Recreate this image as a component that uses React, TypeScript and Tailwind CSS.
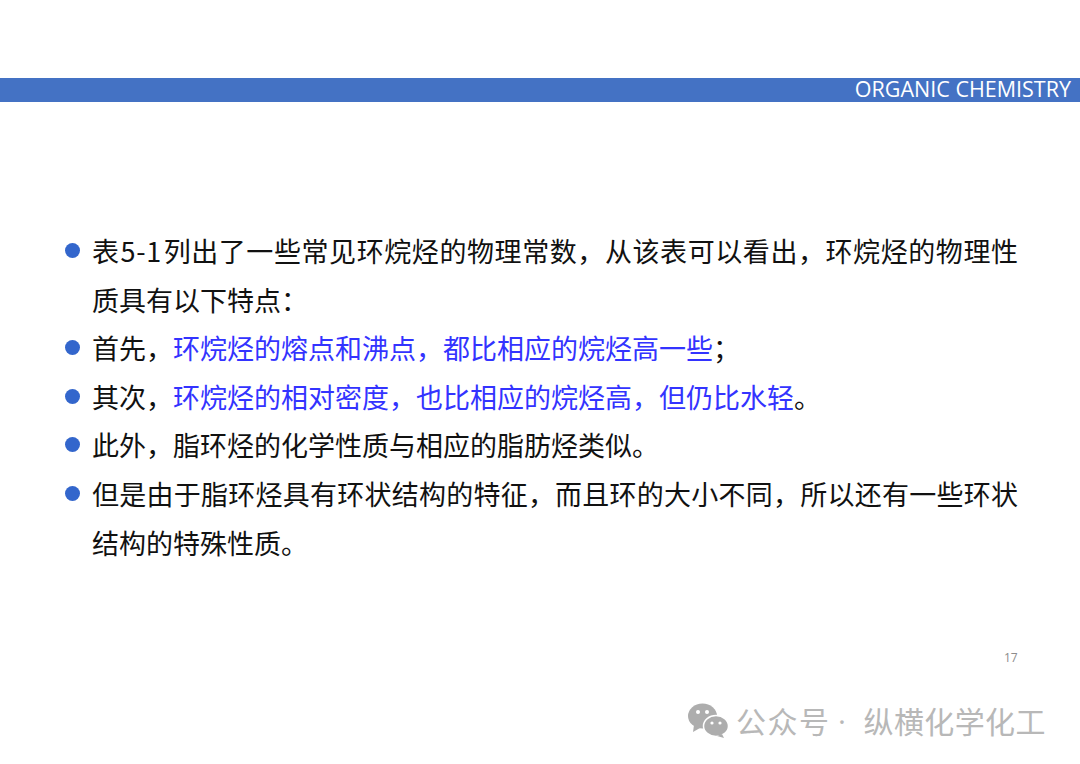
const cjk = "font-['Noto_Sans_CJK_SC','Noto_Sans',sans-serif]";

function Bullet({ children }: { children: React.ReactNode }) {
  return (
    <li className="flex">
      <span className="w-[15px] h-[15px] rounded-full bg-[#3366cc] mt-[16px] ml-[65px] mr-[12px] shrink-0" />
      <div className="w-[926px] text-[27px] leading-[48.6px] text-[#111111] text-justify">{children}</div>
    </li>
  );
}

export default function App() {
  return (
    <div className={`w-[1080px] h-[764px] bg-white relative overflow-hidden ${cjk}`}>
      <div className="h-[78px]" />
      <div className="h-[24px] bg-[#4472c4] flex items-center justify-end pr-[9px] pb-[2px] text-white text-[21.5px] font-['Open_Sans',sans-serif]">
        ORGANIC CHEMISTRY
      </div>
      <ul className="mt-[125px]">
        <Bullet>
          <p className="[text-align-last:justify]">
            表<span className="mx-[1px] tracking-[0.7px]">5-1</span>列出了一些常见环烷烃的物理常数，从该表可以看出，环烷烃的物理性
          </p>
          <p>质具有以下特点：</p>
        </Bullet>
        <Bullet>
          首先，<span className="text-[#3333ff]">环烷烃的熔点和沸点，都比相应的烷烃高一些</span>；
        </Bullet>
        <Bullet>
          其次，<span className="text-[#3333ff]">环烷烃的相对密度，也比相应的烷烃高，但仍比水轻</span>。
        </Bullet>
        <Bullet>此外，脂环烃的化学性质与相应的脂肪烃类似。</Bullet>
        <Bullet>但是由于脂环烃具有环状结构的特征，而且环的大小不同，所以还有一些环状结构的特殊性质。</Bullet>
      </ul>
      <span className="absolute left-[1004px] top-[649px] text-[12px] text-[#8c8c8c] font-['Open_Sans',sans-serif]">17</span>
      <div className="absolute left-[688px] top-[698px] flex items-center text-[#b8b8b8] text-[30px]">
        <svg width="41" height="36" viewBox="0 0 41 36" className="mr-[7px]" fill="#adadad">
          <ellipse cx="14.5" cy="13" rx="14.5" ry="12.5" />
          <path d="M6 22l-1 7 7-4z" />
          <ellipse cx="28" cy="23" rx="12.5" ry="10.5" stroke="#fff" strokeWidth="1.5" />
          <path d="M34 31l2 4-7-2z" />
          <circle cx="10" cy="9" r="2" fill="#fff" />
          <circle cx="19" cy="9" r="2" fill="#fff" />
          <circle cx="24" cy="20" r="1.6" fill="#fff" />
          <circle cx="32" cy="20" r="1.6" fill="#fff" />
        </svg>
        <span className="tracking-[1.5px]">公众号</span>
        <span className="w-[33px] pr-[10px] text-center font-['Open_Sans',sans-serif]">·</span>
        <span className="tracking-[0.4px]">纵横化学化工</span>
      </div>
    </div>
  );
}
